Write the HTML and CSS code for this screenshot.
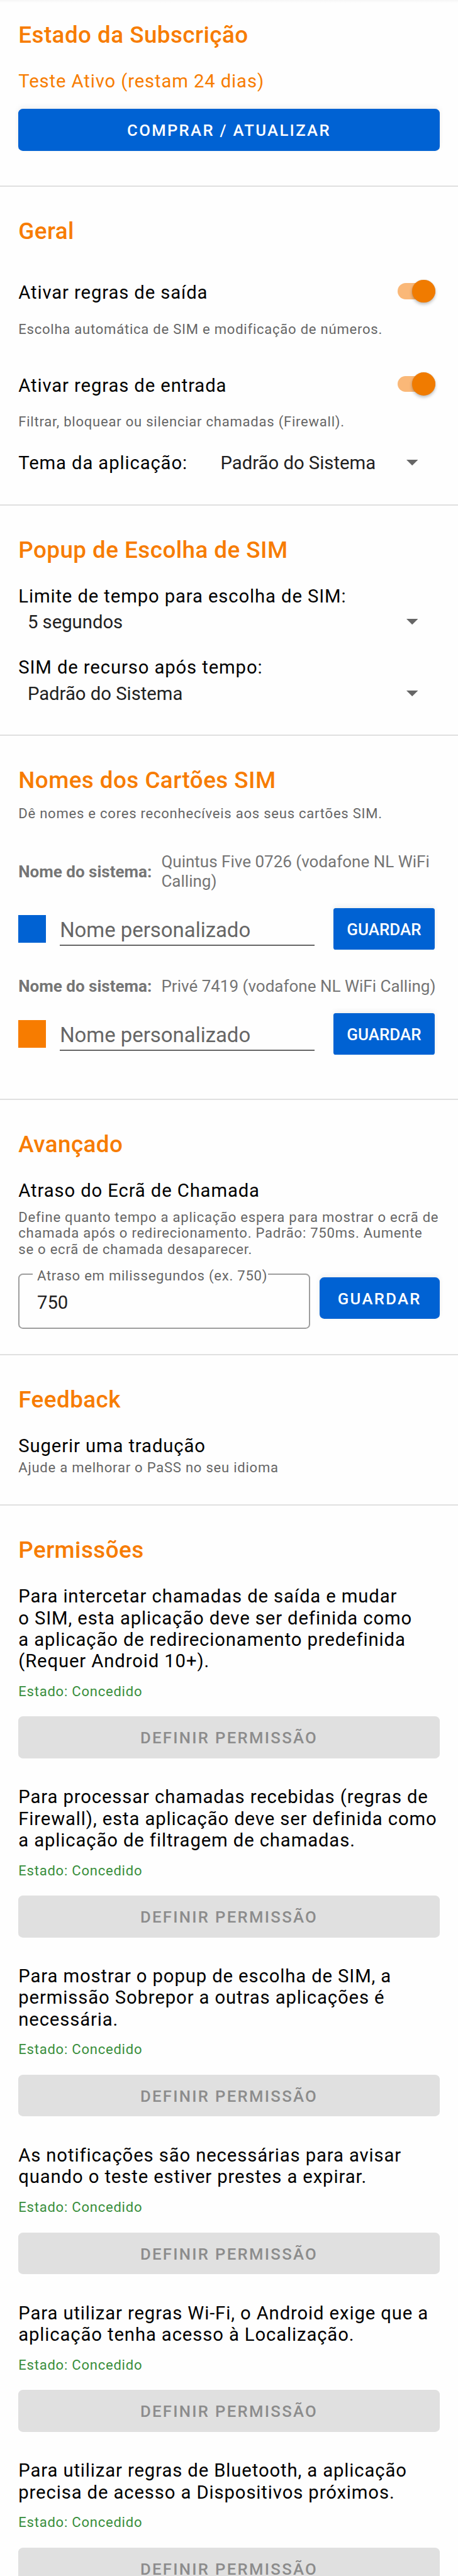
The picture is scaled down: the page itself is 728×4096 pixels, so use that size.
FILE: index.html
```html
<!DOCTYPE html>
<html lang="pt">
<head>
<meta charset="utf-8">
<title>Definições</title>
<link rel="stylesheet" href="styles.css">
</head>
<body>
<main class="screen">
  <section class="section subscription">
    <h2 class="title">Estado da Subscrição</h2>
    <p class="body status">Teste Ativo (restam 24 dias)</p>
    <button class="button">COMPRAR / ATUALIZAR</button>
  </section>

  <section class="section general">
    <h2 class="title">Geral</h2>
    <div class="toggle"><span class="body">Ativar regras de saída</span><span class="switch"><span class="thumb"></span></span></div>
    <p class="caption hint">Escolha automática de SIM e modificação de números.</p>
    <div class="toggle second"><span class="body">Ativar regras de entrada</span><span class="switch"><span class="thumb"></span></span></div>
    <p class="caption hint">Filtrar, bloquear ou silenciar chamadas (Firewall).</p>
    <div class="theme"><span class="body theme-label">Tema da aplicação:</span><div class="spinner"><span>Padrão do Sistema</span><svg class="arrow" viewBox="0 0 18 9"><path d="M0 0h18L9 9z"/></svg></div></div>
  </section>

  <section class="section popup">
    <h2 class="title">Popup de Escolha de SIM</h2>
    <p class="body limit">Limite de tempo para escolha de SIM:</p>
    <div class="spinner inset"><span>5 segundos</span><svg class="arrow" viewBox="0 0 18 9"><path d="M0 0h18L9 9z"/></svg></div>
    <p class="body fallback">SIM de recurso após tempo:</p>
    <div class="spinner inset"><span>Padrão do Sistema</span><svg class="arrow" viewBox="0 0 18 9"><path d="M0 0h18L9 9z"/></svg></div>
  </section>

  <section class="section names">
    <h2 class="title">Nomes dos Cartões SIM</h2>
    <p class="caption intro">Dê nomes e cores reconhecíveis aos seus cartões SIM.</p>
    <div class="system first"><b>Nome do sistema:</b><span>Quintus Five 0726 (vodafone NL WiFi<br>Calling)</span></div>
    <div class="edit"><span class="swatch blue"></span><span class="input">Nome personalizado</span><button class="button plain">GUARDAR</button></div>
    <div class="system"><b>Nome do sistema:</b><span>Privé 7419 (vodafone NL WiFi Calling)</span></div>
    <div class="edit"><span class="swatch orange"></span><span class="input">Nome personalizado</span><button class="button plain">GUARDAR</button></div>
  </section>

  <section class="section advanced">
    <h2 class="title">Avançado</h2>
    <p class="body delay">Atraso do Ecrã de Chamada</p>
    <p class="caption delay-hint">Define quanto tempo a aplicação espera para mostrar o ecrã de<br>chamada após o redirecionamento. Padrão: 750ms. Aumente<br>se o ecrã de chamada desaparecer.</p>
    <div class="delay-row">
      <div class="field"><span class="field-label caption">Atraso em milissegundos (ex. 750)</span><span class="field-value">750</span></div>
      <button class="button save">GUARDAR</button>
    </div>
  </section>

  <section class="section feedback">
    <h2 class="title">Feedback</h2>
    <p class="body suggest">Sugerir uma tradução</p>
    <p class="caption suggest-hint">Ajude a melhorar o PaSS no seu idioma</p>
  </section>

  <section class="section permissions">
    <h2 class="title">Permissões</h2>
    <div class="permission">
      <p class="body">Para intercetar chamadas de saída e mudar<br>o SIM, esta aplicação deve ser definida como<br>a aplicação de redirecionamento predefinida<br>(Requer Android 10+).</p>
      <p class="caption granted">Estado: Concedido</p>
      <button class="button" disabled>DEFINIR PERMISSÃO</button>
    </div>
    <div class="permission">
      <p class="body">Para processar chamadas recebidas (regras de<br>Firewall), esta aplicação deve ser definida como<br>a aplicação de filtragem de chamadas.</p>
      <p class="caption granted">Estado: Concedido</p>
      <button class="button" disabled>DEFINIR PERMISSÃO</button>
    </div>
    <div class="permission">
      <p class="body">Para mostrar o popup de escolha de SIM, a<br>permissão Sobrepor a outras aplicações é<br>necessária.</p>
      <p class="caption granted">Estado: Concedido</p>
      <button class="button" disabled>DEFINIR PERMISSÃO</button>
    </div>
    <div class="permission">
      <p class="body">As notificações são necessárias para avisar<br>quando o teste estiver prestes a expirar.</p>
      <p class="caption granted">Estado: Concedido</p>
      <button class="button" disabled>DEFINIR PERMISSÃO</button>
    </div>
    <div class="permission">
      <p class="body">Para utilizar regras Wi-Fi, o Android exige que a<br>aplicação tenha acesso à Localização.</p>
      <p class="caption granted">Estado: Concedido</p>
      <button class="button" disabled>DEFINIR PERMISSÃO</button>
    </div>
    <div class="permission">
      <p class="body">Para utilizar regras de Bluetooth, a aplicação<br>precisa de acesso a Dispositivos próximos.</p>
      <p class="caption granted">Estado: Concedido</p>
      <button class="button" disabled>DEFINIR PERMISSÃO</button>
    </div>
  </section>
</main>
</body>
</html>
```
FILE: styles.css
```css
* { box-sizing: border-box; }
html, body { margin: 0; }
body { background: #fefefe; font-family: Roboto, sans-serif; color: #000; }
h2, p { margin: 0; font-weight: 400; }

.screen {
  width: 728px;
  height: 4096px;
  overflow: hidden;
  background: linear-gradient(#f6f6f6, #fefefe 5px);
}

.section {
  padding: 49px 29.25px 0;
  border-bottom: 2px solid #e0e0e0;
  white-space: nowrap;
}
.subscription { height: 297px; padding-top: 34px; }
.general { height: 507px; padding-top: 48.5px; }
.popup { height: 366px; }
.names { height: 579px; }
.advanced { height: 406px; }
.feedback { height: 239px; }
.permissions { border-bottom: 0; }

.title { font-size: 36.8px; line-height: 43px; font-weight: 500; letter-spacing: 0.0125em; color: #f77c00; }
.body { display: block; font-size: 29.25px; line-height: 34.2px; letter-spacing: 0.0302em; }
.caption { font-size: 22.05px; line-height: 25.8px; letter-spacing: 0.0345em; color: #666; }

.button {
  display: block;
  width: 100%;
  height: 66.6px;
  padding: 2px 0 0;
  border: 0;
  border-radius: 7.3px;
  background: #0062d3;
  color: #fff;
  font: 500 25.7px/30px Roboto, sans-serif;
  letter-spacing: 0.0893em;
  text-align: center;
  box-shadow: 0 -3px 9px rgba(0, 0, 0, 0.06), 0 0 3px rgba(0, 0, 0, 0.04);
}
.button:disabled { background: #e0e0e0; color: #8c8c8c; box-shadow: none; }
.button.plain { width: 161.3px; margin-left: 29.4px; border-radius: 3.6px; font-size: 26px; letter-spacing: 0; }

.status { margin-top: 35px; color: #f77c00; }
.subscription .button { margin-top: 26.8px; }

.toggle { display: flex; justify-content: space-between; height: 38px; margin-top: 55.5px; }
.toggle.second { margin-top: 55px; }
.toggle .body { padding-top: 4px; }
.switch { display: flex; justify-content: flex-end; width: 60px; height: 25.6px; margin: 6.2px 6.8px 0 0; border-radius: 13px; background: #fab878; }
.thumb { width: 36.8px; height: 36.8px; margin-top: -5.6px; border-radius: 50%; background: #f07b00; box-shadow: 0 3px 5px rgba(0, 0, 0, 0.24), 0 0 2px rgba(0, 0, 0, 0.12); }
.hint { margin-top: 28.8px; }

.theme { display: flex; margin-top: 34.8px; }
.theme-label { width: 321.3px; }
.spinner { display: flex; flex: 1; justify-content: space-between; align-items: center; height: 34.2px; padding-right: 34.7px; font-size: 29.25px; line-height: 34.2px; color: #212121; }
.spinner.inset { margin-top: 7.6px; padding-left: 14.65px; }
.arrow { width: 18.4px; height: 9.2px; margin-top: -1px; fill: #666; }
.limit { margin-top: 34.5px; }
.fallback { margin-top: 37.3px; }

.intro { margin-top: 19.3px; }
.system { display: flex; align-items: center; margin-top: 43.2px; font-size: 26px; line-height: 31px; color: #757575; }
.system.first { margin-top: 48.2px; }
.system b { width: 227.2px; }
.edit { display: flex; align-items: flex-start; height: 66.6px; margin-top: 26.3px; }
.swatch { width: 44px; height: 44px; margin-top: 11px; }
.swatch.blue { background: #0062d3; }
.swatch.orange { background: #f77c00; }
.input { width: 405.3px; height: 45.5px; margin: 15px 0 0 21.9px; border-bottom: 2px solid #666; font-size: 32.9px; line-height: 39px; color: #666; }

.delay { margin-top: 35px; }
.delay-hint { margin-top: 12.4px; }
.delay-row { display: flex; margin-top: 25.4px; }
.field { position: relative; width: 464.3px; height: 87.2px; padding: 26.5px 0 0 27.7px; border: 2px solid #9e9e9e; border-radius: 7.3px; }
.field-label { position: absolute; left: 20.3px; top: -11.5px; width: 374px; padding-left: 7.4px; background: #fefefe; }
.field-value { font-size: 29.25px; line-height: 34.2px; color: #212121; }
.save { width: 191px; margin: 5.5px 0 0 14.5px; }

.suggest { margin-top: 34.9px; }
.suggest-hint { margin-top: 4.5px; }

.permission { margin-top: 44.7px; }
.title + .permission { margin-top: 35.3px; }
.granted { margin-top: 18.6px; color: #388e3c; }
.permission .button { margin-top: 26.6px; }
```
